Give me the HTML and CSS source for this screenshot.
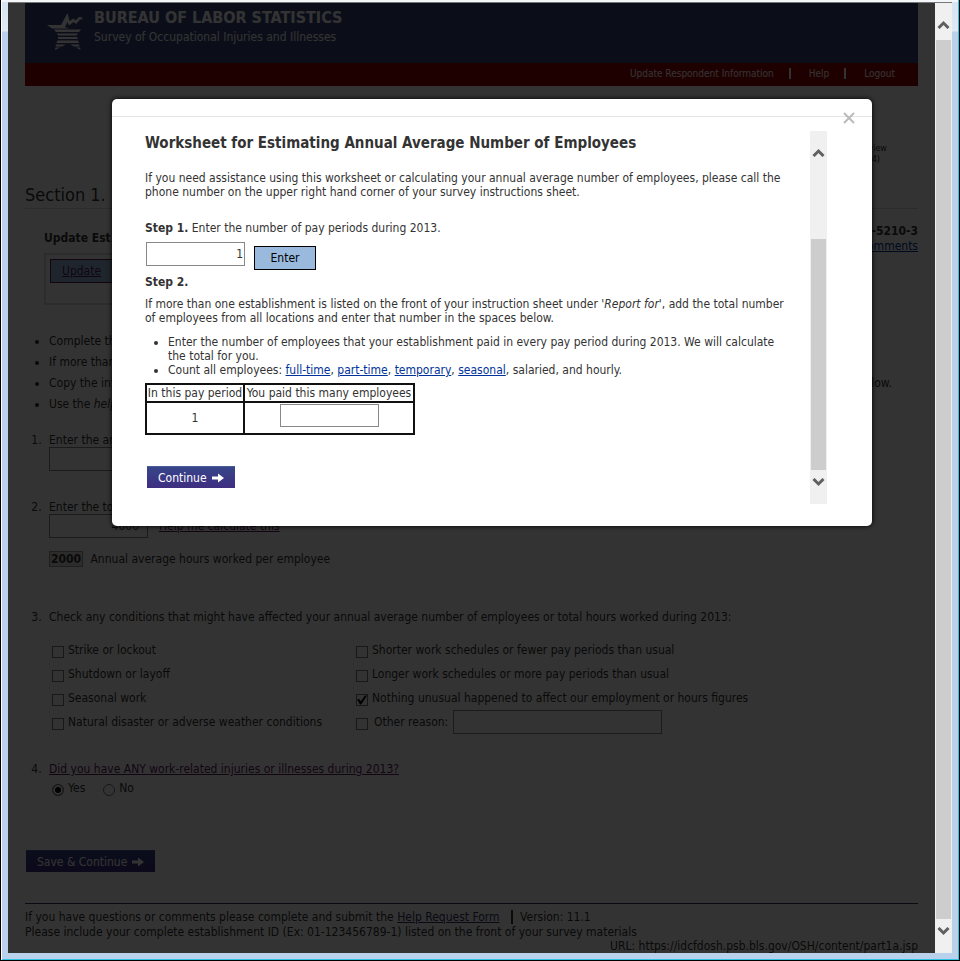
FILE: index.html
```html
<!DOCTYPE html>
<html lang="en">
  <head>
    <meta charset="UTF-8" />
    <meta name="viewport" content="width=device-width, initial-scale=1.0" />
    <title>Survey of Occupational Injuries and Illnesses</title>
    <link rel="stylesheet" href="styles.css">
  </head>
  <body>
    <div class="window">
      <div class="page">
        <header class="banner">
          <svg class="logo" viewBox="0 0 36 37" aria-hidden="true">
            <path d="M0 12H14L20.500 0L22.500 8L26.500 5.500L28.500 7.500L32 4L35.500 4.500L35 6.500H33L29 11L26.500 9L22 12.500L20.500 9L18 14L22 15.500H5Z" />
            <path d="M7 16.500H34L32 19H9Z" />
            <path d="M10 20.500H31L29.500 22.500H11Z" />
            <path d="M11 24H30L31 26H11Z" />
            <path d="M10.500 27.500H31L32 30H9.500Z" />
            <path d="M9 31.500H19L15 33.500H8.500ZM23 31.500H32L32.500 33.500H27Z" />
            <path d="M8.500 34.500H13L8 37ZM29 34.500H33L33.500 37Z" />
          </svg>
          <div>
            <h1>BUREAU OF LABOR STATISTICS</h1>
            <p>Survey of Occupational Injuries and Illnesses</p>
          </div>
        </header>
        <nav class="top-nav">
          <a href="#">Update Respondent Information</a>
          <a href="#">Help</a>
          <a href="#">Logout</a>
        </nav>

        <div class="steps">
          <span>Review<br />(of 4)</span>
        </div>

        <h2 class="section-title">Section 1.</h2>

        <div class="establishment">
          <div>
            <h3>Update Est.</h3>
            <div class="update-box">
              <a class="update-btn" href="#">Update</a>
            </div>
          </div>
          <div class="survey-id">
            <strong>-5210-3</strong>
            <a href="#">Comments</a>
          </div>
        </div>

        <ul class="instructions">
          <li>Complete this</li>
          <li>If more than one</li>
          <li>Copy the info <span class="below">below.</span></li>
          <li>Use the <em>help</em> link</li>
        </ul>

        <ol class="questions">
          <li class="q-average">
            <label for="average">Enter the annual</label>
            <div class="answer"><input class="number" type="text" id="average" /></div>
          </li>
          <li class="q-hours">
            <label for="hours">Enter the total</label>
            <div class="answer">
              <input class="number" type="text" id="hours" value="4000" />
              <a href="#">Help me calculate this</a>
            </div>
            <div class="per-employee">
              <output>2000</output> Annual average hours worked per employee
            </div>
          </li>
          <li class="q-conditions">
            Check any conditions that might have affected your annual average number of employees or total hours worked during 2013:
            <div class="conditions">
              <label><input type="checkbox" />Strike or lockout</label>
              <label><input type="checkbox" />Shorter work schedules or fewer pay periods than usual</label>
              <label><input type="checkbox" />Shutdown or layoff</label>
              <label><input type="checkbox" />Longer work schedules or more pay periods than usual</label>
              <label><input type="checkbox" />Seasonal work</label>
              <label><input type="checkbox" checked />Nothing unusual happened to affect our employment or hours figures</label>
              <label><input type="checkbox" />Natural disaster or adverse weather conditions</label>
              <div class="other">
                <label><input type="checkbox" />Other reason:</label>
                <input class="reason" type="text" aria-label="Other reason" />
              </div>
            </div>
          </li>
          <li class="q-injuries">
            <a href="#">Did you have ANY work-related injuries or illnesses during 2013?</a>
            <div class="radios">
              <label><input type="radio" name="injuries" checked />Yes</label>
              <label><input type="radio" name="injuries" />No</label>
            </div>
          </li>
        </ol>

        <button class="continue-btn" type="button">
          Save &amp; Continue
          <svg viewBox="0 0 12 10" aria-hidden="true"><path d="M0 3.500H6V0.500L12 5L6 9.500V6.500H0Z" /></svg>
        </button>

        <footer>
          <p>If you have questions or comments please complete and submit the <a href="#">Help Request Form</a> <span class="version">Version: 11.1</span></p>
          <p>Please include your complete establishment ID (Ex: 01-123456789-1) listed on the front of your survey materials</p>
          <p class="url">URL: https://idcfdosh.psb.bls.gov/OSH/content/part1a.jsp</p>
        </footer>

        <!-- worksheet dialog -->
        <div class="overlay">
          <div class="modal" role="dialog" aria-labelledby="worksheet-title">
            <div class="modal-bar">
              <button class="close" type="button" aria-label="Close">
                <svg viewBox="0 0 12 12"><path d="M1 1L11 11M11 1L1 11" /></svg>
              </button>
            </div>
            <div class="modal-body">
              <div class="worksheet">
                <h2 id="worksheet-title">Worksheet for Estimating Annual Average Number of Employees</h2>
                <p class="intro">If you need assistance using this worksheet or calculating your annual average number of employees, please call the phone number on the upper right hand corner of your survey instructions sheet.</p>
                <label class="step-one" for="periods"><strong>Step 1.</strong> Enter the number of pay periods during 2013.</label>
                <div class="periods">
                  <input class="number" type="text" id="periods" value="1" />
                  <button class="enter-btn" type="button">Enter</button>
                </div>
                <h3>Step 2.</h3>
                <p class="report">If more than one establishment is listed on the front of your instruction sheet under <em>'Report for'</em>, add the total number of employees from all locations and enter that number in the spaces below.</p>
                <ul>
                  <li>Enter the number of employees that your establishment paid in every pay period during 2013. We will calculate the total for you.</li>
                  <li>Count all employees: <a href="#">full-time</a>, <a href="#">part-time</a>, <a href="#">temporary</a>, <a href="#">seasonal</a>, salaried, and hourly.</li>
                </ul>
                <table>
                  <thead>
                    <tr><th>In this pay period</th><th>You paid this many employees</th></tr>
                  </thead>
                  <tbody>
                    <tr><td>1</td><td><input class="number" type="text" aria-label="Employees paid in period 1" /></td></tr>
                  </tbody>
                </table>
                <button class="continue-btn" type="button">
                  Continue
                  <svg viewBox="0 0 12 10" aria-hidden="true"><path d="M0 3.500H6V0.500L12 5L6 9.500V6.500H0Z" /></svg>
                </button>
              </div>
              <div class="scrollbar modal-scroll" aria-hidden="true">
                <svg viewBox="0 0 12 9"><path d="M1 8L6 3L11 8" /></svg>
                <div class="thumb"></div>
                <svg viewBox="0 0 12 9"><path d="M1 1L6 6L11 1" /></svg>
              </div>
            </div>
          </div>
        </div>
      </div>

      <div class="scrollbar page-scroll" aria-hidden="true">
        <svg viewBox="0 0 12 9"><path d="M1 8L6 3L11 8" /></svg>
        <div class="thumb"></div>
        <svg viewBox="0 0 12 9"><path d="M1 1L6 6L11 1" /></svg>
      </div>
    </div>
  </body>
</html>
```
FILE: styles.css
```css
* {
  box-sizing: border-box;
}
body {
  margin: 0;
  font-family: Tahoma, "DejaVu Sans Condensed", "DejaVu Sans", sans-serif;
  font-size: 12px;
  line-height: 14px;
  color: #333;
}
h1,
h2,
h3,
p,
ul,
ol {
  margin: 0;
}
input,
button {
  font: inherit;
  color: inherit;
}
a {
  color: #039;
}

/* browser window frame */
.window {
  display: flex;
  min-height: 100vh;
  padding: 2px 7px 7px;
  border: solid #000;
  border-width: 0 1px 1px;
  background: linear-gradient(#f4f7fa 2px, #d6e4f3 2px, #dfe9f5 31px, #b9d1ea 32px);
  box-shadow: inset 1px 0 #fff, inset -1px -1px #2fc4e6;
}
.page {
  position: relative;
  flex: 1;
  padding: 0 17px;
  border-top: 1px solid #777;
  background: #fff;
}

/* header */
.banner {
  display: flex;
  gap: 11px;
  height: 60px;
  padding: 7px 22px;
  background: #37467d;
  color: #fff;
}
.logo {
  width: 36px;
  height: 37px;
  margin-top: 3px;
  fill: #fff;
}
.banner h1 {
  font-size: 16px;
  line-height: 16px;
}
.banner p {
  margin-top: 4px;
}
.top-nav {
  display: flex;
  justify-content: flex-end;
  height: 23px;
  padding: 4px 23px;
  background: #9b0000;
  font-size: 10px;
}
.top-nav a {
  color: #fff;
  text-decoration: none;
}
.top-nav a + a {
  margin-left: 15px;
}
.top-nav a + a::before {
  content: "";
  display: inline-block;
  width: 2px;
  height: 11px;
  margin-right: 18px;
  background: #fff;
  vertical-align: -2px;
}
.steps {
  display: flex;
  justify-content: flex-end;
  padding: 57px 31px 0 0;
  font-size: 9px;
  line-height: 11px;
}

/* establishment */
.section-title {
  margin-top: 18px;
  padding-bottom: 1px;
  border-bottom: 1px solid #ddd;
  font-size: 18px;
  font-weight: normal;
  line-height: 24px;
}
.establishment {
  display: flex;
  justify-content: space-between;
  margin: 15px 0 26px 19px;
}
.establishment h3 {
  margin-top: 7px;
  font-size: 12px;
}
.update-box {
  width: 240px;
  height: 52px;
  margin-top: 8px;
  padding: 4px;
  border: 2px solid #ddd;
}
.update-btn {
  display: inline-block;
  width: 80px;
  padding: 4px 11px;
  border: 1px solid #551a4b;
  background: #99badd;
  color: #551a6b;
}
.survey-id {
  display: flex;
  flex-direction: column;
  align-items: flex-end;
}
.survey-id a {
  margin-top: 1px;
}
.instructions {
  padding-left: 24px;
  line-height: 21px;
}
.below {
  float: right;
  margin-right: 26px;
}

/* questions */
.questions {
  padding-left: 20px;
}
.questions > li {
  padding-left: 4px;
}
.questions a {
  color: #602060;
}
input[type="text"] {
  height: 24px;
  padding: 0 1px;
  border: 1px solid #888;
  background: #fff;
}
.number {
  width: 99px;
  text-align: right;
}
.q-average {
  margin-top: 18px;
}
.answer {
  display: flex;
  gap: 11px;
  align-items: center;
}
#hours {
  padding-right: 8px;
}
.q-hours {
  margin-top: 29px;
}
.per-employee {
  margin-top: 13px;
}
output {
  display: inline-block;
  margin-right: 4px;
  padding: 0 1px;
  border: 1px solid #999;
  background: #ddd;
  font-weight: bold;
}
.q-conditions {
  margin-top: 43px;
}
.conditions {
  display: grid;
  grid-template-columns: 304px 1fr;
  grid-auto-rows: 24px;
  margin-top: 14px;
  padding-left: 3px;
  align-items: center;
}
.conditions label,
.radios label {
  display: flex;
  gap: 4px;
}
input[type="checkbox"],
input[type="radio"] {
  appearance: none;
  flex: none;
  width: 12px;
  height: 12px;
  margin: 3px 0 0;
  border: 1px solid #777;
}
input[type="checkbox"]:checked::after {
  content: "";
  display: block;
  height: 10px;
  background: #000;
  clip-path: polygon(0 50%, 20% 45%, 38% 68%, 80% 10%, 100% 10%, 42% 100%, 30% 100%);
}
input[type="radio"] {
  border-radius: 50%;
}
input[type="radio"]:checked {
  background: #000;
  box-shadow: inset 0 0 0 2px #fff;
}
.other {
  display: flex;
  gap: 5px;
  align-items: center;
}
.other label {
  gap: 6px;
}
.reason {
  width: 209px;
}
.q-injuries {
  margin-top: 28px;
}
.radios {
  display: flex;
  gap: 18px;
  margin-top: 5px;
  padding-left: 3px;
}
.continue-btn {
  display: flex;
  gap: 5px;
  align-items: center;
  height: 22px;
  padding: 0 11px;
  border: 0;
  border-top: 1px solid #4a5a94;
  background: linear-gradient(#36458a, #3f2e80);
  color: #fff;
}
.continue-btn svg {
  width: 12px;
  height: 10px;
  fill: #fff;
}
.page > .continue-btn {
  margin: 54px 0 31px 1px;
}
footer {
  padding: 6px 0 0;
  border-top: 1px solid #336;
}
footer p {
  line-height: 15px;
}
footer .url {
  line-height: 13px;
  text-align: right;
}
footer a {
  color: #336;
}
.version {
  margin-left: 8px;
  padding-left: 7px;
  border-left: 2px solid #333;
}

/* dialog */
.overlay {
  position: absolute;
  inset: 0;
  padding: 96px 63px 0 104px;
  background: rgba(0, 0, 0, 0.8);
}
.modal {
  position: relative;
  border-radius: 5px;
  background: #fff;
  box-shadow: 0 0 5px #000;
}
.modal-bar {
  height: 18px;
  border-bottom: 1px solid #e5e5e5;
}
.close {
  position: absolute;
  top: 13px;
  right: 17px;
  width: 12px;
  height: 12px;
  padding: 0;
  border: 0;
  background: none;
}
.close svg {
  display: block;
  fill: none;
  stroke: #bbb;
  stroke-width: 2;
}
.modal-body {
  display: flex;
  gap: 18px;
  padding: 14px 45px 22px 33px;
}
.worksheet {
  flex: 1;
  padding-bottom: 16px;
}
.worksheet h2 {
  font-size: 15px;
  line-height: 24px;
}
.worksheet h3 {
  margin-top: 5px;
  font-size: 12px;
}
.intro {
  margin-top: 16px;
}
.step-one {
  display: block;
  margin-top: 22px;
}
.periods {
  display: flex;
  gap: 9px;
  margin: 7px 0 0 1px;
}
.enter-btn {
  width: 62px;
  height: 24px;
  margin-top: 4px;
  border: 1px solid #000;
  background: #99badd;
  color: #000;
}
.report {
  margin-top: 8px;
}
.worksheet ul {
  margin: 10px 0 6px;
  padding-left: 23px;
}
.worksheet table {
  border-collapse: collapse;
}
.worksheet th,
.worksheet td {
  padding: 0;
  border: 2px solid #111;
  font-weight: normal;
  text-align: center;
}
.worksheet th {
  height: 18px;
}
.worksheet th:first-child {
  width: 98px;
}
.worksheet th:last-child {
  width: 170px;
}
.worksheet td {
  height: 32px;
}
.worksheet td .number {
  display: block;
  height: 23px;
  margin: 0 auto 6px;
}
.worksheet .continue-btn {
  margin: 31px 0 0 2px;
}

/* scrollbars */
.scrollbar {
  display: flex;
  flex-direction: column;
  align-items: center;
  width: 17px;
  background: #f0f0f0;
}
.scrollbar svg {
  width: 13px;
  height: 9px;
  fill: none;
  stroke: #606060;
  stroke-width: 3;
}
.thumb {
  flex: 1;
  width: 15px;
  background: #cdcdcd;
}
.modal-scroll {
  padding: 17px 0;
}
.modal-scroll .thumb {
  margin: 82px 0 8px;
}
.page-scroll {
  padding: 17px 0;
  border-top: 1px solid #777;
}
.page-scroll .thumb {
  margin: 11px 0 8px;
}
```
